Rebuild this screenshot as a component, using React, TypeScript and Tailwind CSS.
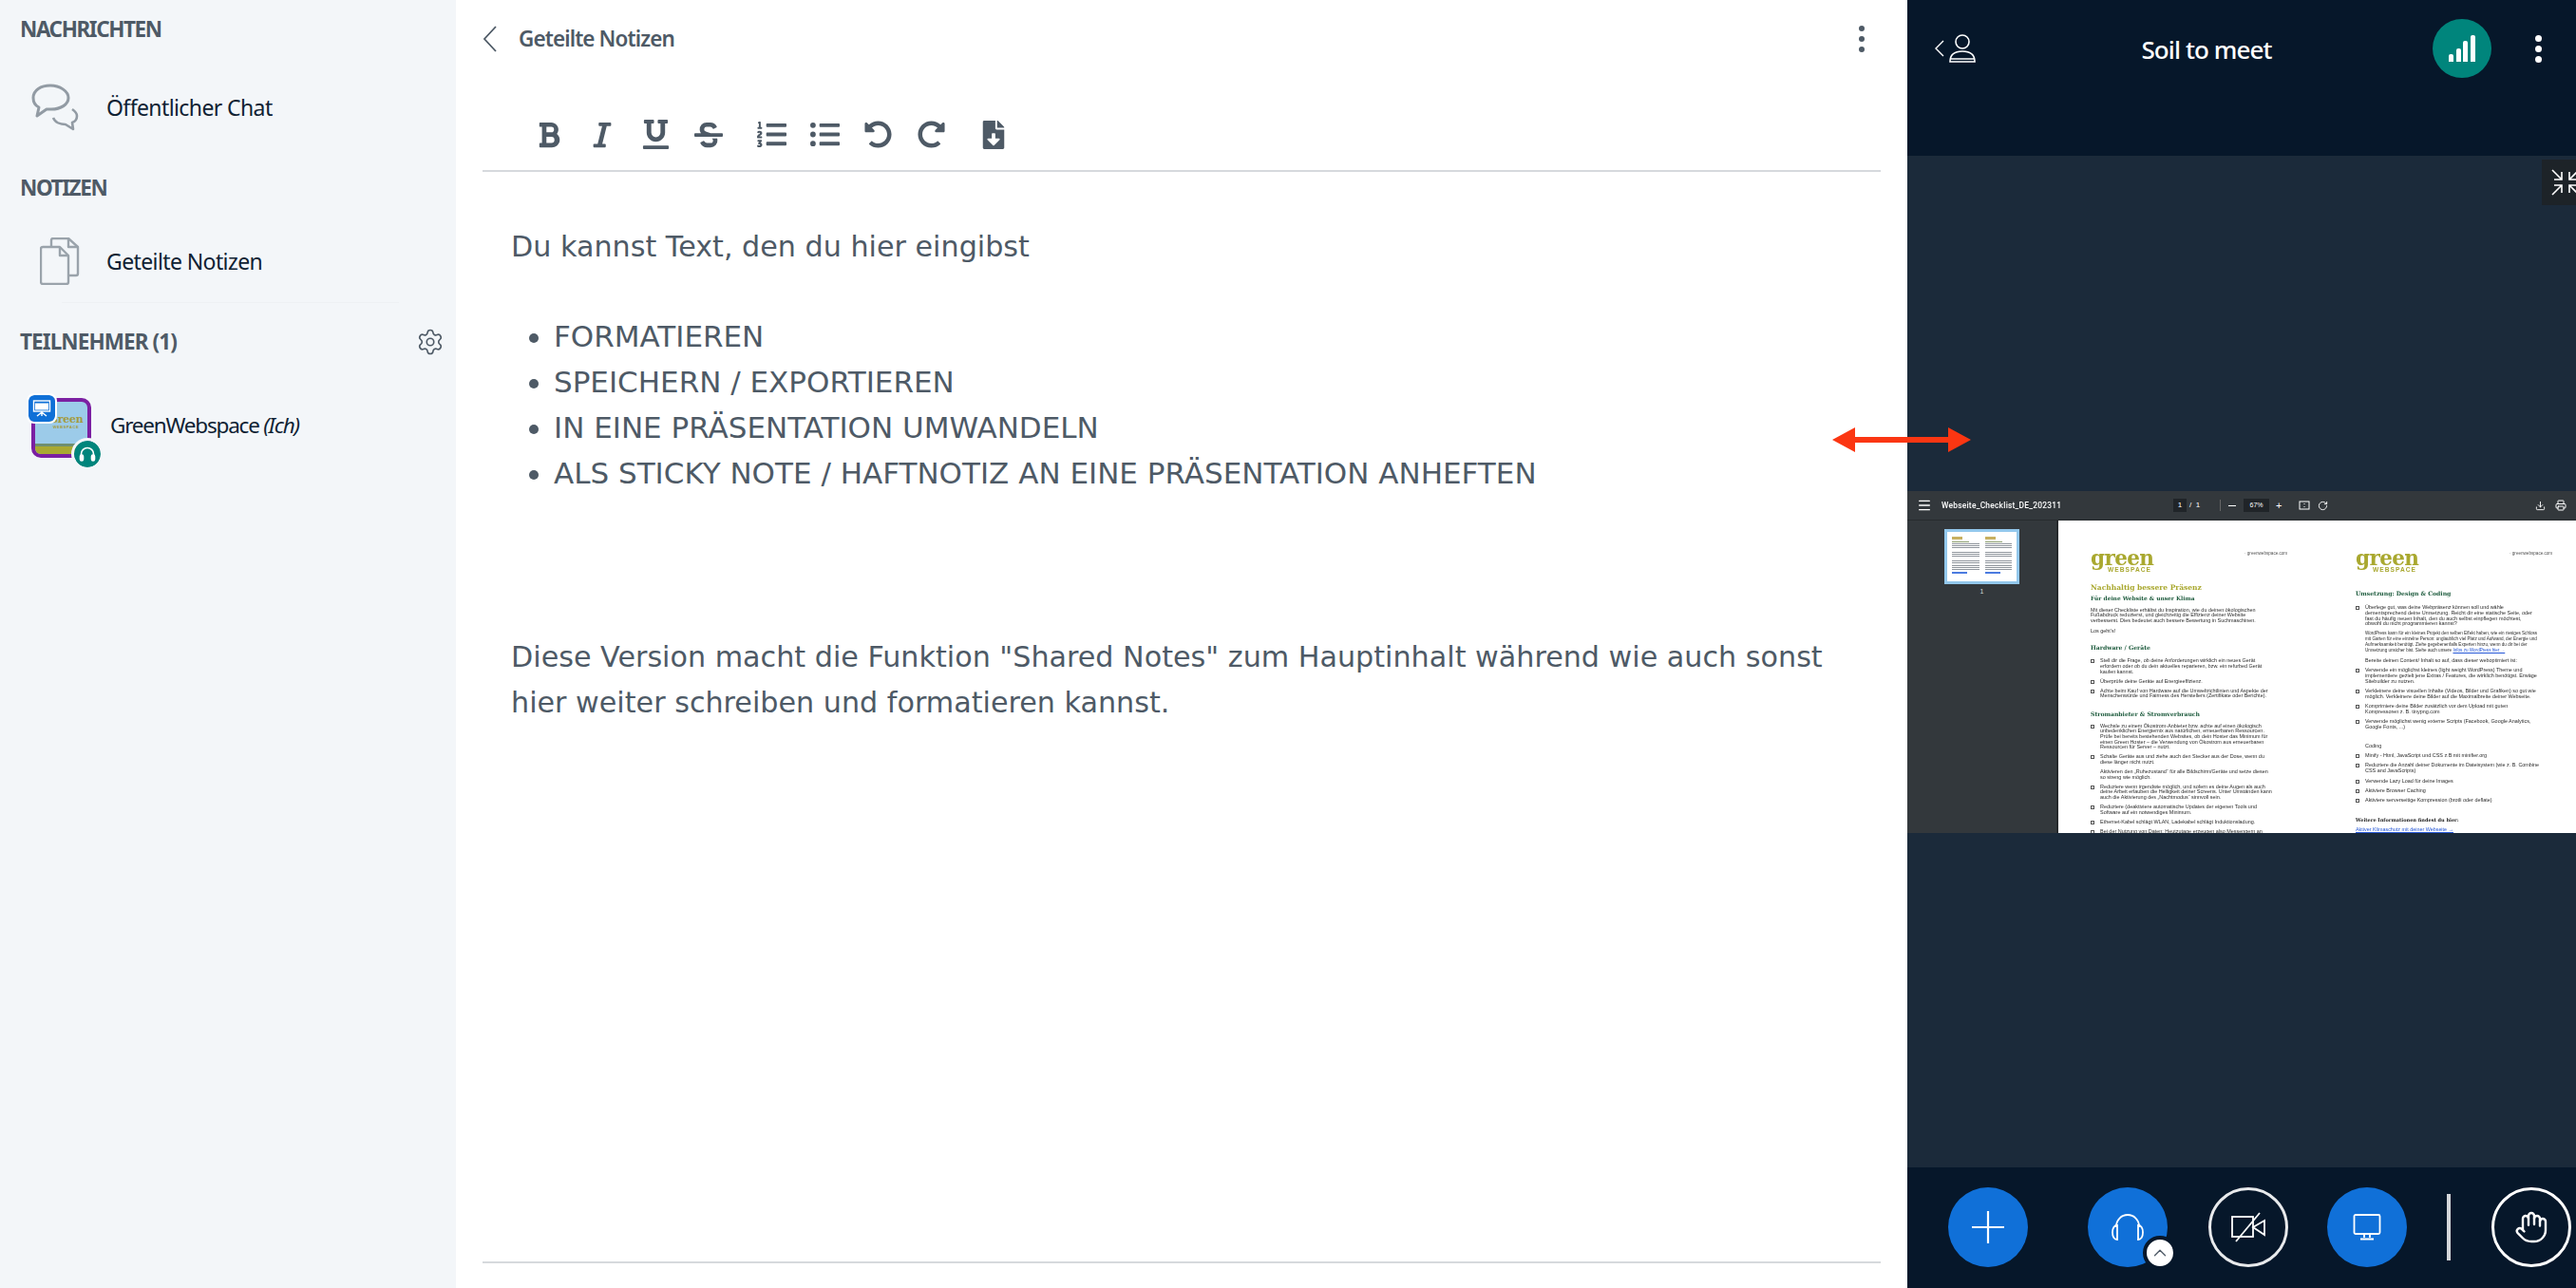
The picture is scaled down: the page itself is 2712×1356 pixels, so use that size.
import React from "react";
import { FaBold, FaItalic, FaUnderline, FaStrikethrough, FaListOl, FaListUl, FaUndoAlt, FaRedoAlt, FaFileDownload } from "react-icons/fa";
import { Settings, Hand, ChevronUp, Download, Printer, RotateCw, Menu } from "lucide-react";

const ui = "font-['Noto_Sans',sans-serif]";

function ChatIcon() {
  return (
    <svg width="50" height="50" viewBox="0 0 50 50" fill="none" stroke="#929ba4" strokeWidth="3" strokeLinejoin="round" className="shrink-0">
      <path d="M20 2C10 2 2 7 2 15c0 5 2 8 6 10l-2 9 10-7c2 0 3 0 5 0 10 0 18-5 18-12S30 2 20 2z" />
      <path d="M43 27c3 2 5 4 5 7 0 3-2 6-5 7l1 7-8-5c-5 0-11-2-13-7" strokeWidth="2.6" />
    </svg>
  );
}

function NotesIcon() {
  return (
    <svg width="42" height="50" viewBox="0 0 42 50" fill="none" stroke="#9aa3ab" strokeWidth="2.4" strokeLinejoin="round" className="shrink-0">
      <path d="M12 9V3c0-1 .6-2 2-2h16l10 9v28c0 1-1 2-2 2h-7" />
      <path d="M30 1v9h10" />
      <path d="M3 10h18l9 9v28c0 1-1 2-2 2H3c-1 0-2-1-2-2V12c0-1 1-2 2-2z" />
      <path d="M21 10v9h9" />
    </svg>
  );
}

function Avatar() {
  return (
    <div className="relative w-[63px] h-[63px] shrink-0">
      <div className="w-full h-full rounded-[10px] border-[4px] border-[#7b1fa2] bg-[#9ccbe9] overflow-hidden flex flex-col items-center">
        <div className="mt-[14px] ml-[10px] font-['DejaVu_Serif',serif] font-bold text-[11px] leading-[10px] text-[#a49b3c] tracking-[-0.3px]">Green</div>
        <div className="ml-[10px] font-['Liberation_Sans',sans-serif] font-bold text-[4px] leading-[5px] tracking-[0.6px] text-[#a49b3c]">WEBSPACE</div>
        <div className="mt-auto w-full h-[3px] bg-[#6f8f70]" />
        <div className="w-full h-[8px] bg-[#a9a932]" />
      </div>
      <div className="absolute left-[-3px] top-[-3px] w-[28px] h-[28px] rounded-[6px] bg-[#0f70d7] outline-[2px] outline-white flex items-center justify-center">
        <svg width="20" height="20" viewBox="0 0 20 20" fill="none" stroke="white" strokeWidth="1.4">
          <rect x="1.500" y="2" width="17" height="11" fill="none" />
          <rect x="3" y="4.500" width="14" height="7" fill="white" stroke="none" />
          <path d="M10 13v5M10 14l-5 4M10 14l5 4" />
        </svg>
      </div>
      <div className="absolute left-[45px] top-[45px] w-[28px] h-[28px] rounded-full bg-[#00857c] outline-[3px] outline-[#f3f6f9] flex items-center justify-center">
        <svg width="18" height="18" viewBox="0 0 18 18" fill="none" stroke="white" strokeWidth="1.6">
          <path d="M2.500 11V9a6.500 6.500 0 0 1 13 0v2" />
          <rect x="1.500" y="10" width="3" height="6" rx="1.400" fill="white" />
          <rect x="13.500" y="10" width="3" height="6" rx="1.400" fill="white" />
        </svg>
      </div>
    </div>
  );
}

function Sidebar() {
  const head = "text-[22.5px] leading-[30px] font-bold text-[#4e5a66]";
  const item = "text-[23px] leading-[30px] text-[#0f2233] tracking-[-0.6px]";
  return (
    <aside className={`w-[480px] shrink-0 h-full bg-[#f3f6f9] flex flex-col ${ui}`}>
      <div className={`${head} ml-[21px] mt-[16px] tracking-[-1.4px]`}>NACHRICHTEN</div>
      <div className="flex items-center ml-[33px] mt-[42px] h-[50px]">
        <ChatIcon />
        <div className={`${item} ml-[29px]`}>Öffentlicher Chat</div>
      </div>
      <div className={`${head} ml-[21px] mt-[45px] tracking-[-1.4px]`}>NOTIZEN</div>
      <div className="flex items-center ml-[42px] mt-[37px] h-[50px]">
        <NotesIcon />
        <div className={`${item} ml-[28px]`}>Geteilte Notizen</div>
      </div>
      <div className="h-px bg-[#eef1f4] ml-[65px] mr-[60px] mt-[18px]" />
      <div className="flex items-center justify-between ml-[21px] mr-[12px] mt-[26px] h-[30px]">
        <div className={`${head} tracking-[-0.9px]`}>TEILNEHMER (1)</div>
        <Settings size={30} strokeWidth={1.3} color="#4e5a66" />
      </div>
      <div className="flex items-center ml-[33px] mt-[44px]">
        <Avatar />
        <div className="ml-[20px] text-[22.5px] leading-[30px] text-[#0f2233] tracking-[-1.2px] relative top-[-3px]">
          GreenWebspace <span className="italic">(Ich)</span>
        </div>
      </div>
    </aside>
  );
}

function Tool({ children, className = "" }: { children: React.ReactNode; className?: string }) {
  return <div className={`w-[56px] shrink-0 flex justify-center text-[#4e5a66] ${className}`}>{children}</div>;
}

function Notes() {
  return (
    <main className="flex-1 h-full bg-white flex flex-col">
      <div className="flex items-center h-[82px] pl-[28px] pr-[45px]">
        <svg width="16" height="28" viewBox="0 0 16 28" fill="none" stroke="#4e5a66" strokeWidth="1.8"><path d="M14 1L2 14l12 13" /></svg>
        <div className={`ml-[22px] text-[22.5px] font-semibold text-[#4e5a66] tracking-[-0.9px] ${ui}`}>Geteilte Notizen</div>
        <div className="ml-auto flex flex-col gap-[5px]">
          <div className="w-[6px] h-[6px] rounded-full bg-[#4e5a66]" />
          <div className="w-[6px] h-[6px] rounded-full bg-[#4e5a66]" />
          <div className="w-[6px] h-[6px] rounded-full bg-[#4e5a66]" />
        </div>
      </div>
      <div className="mx-[28px] h-[99px] border-b-2 border-[#d6d9dd] flex items-center pl-[42px] pt-[22px]">
        <Tool><FaBold size={30} /></Tool>
        <Tool><FaItalic size={30} /></Tool>
        <Tool><FaUnderline size={31} /></Tool>
        <Tool><FaStrikethrough size={30} /></Tool>
        <Tool className="ml-[10px]"><FaListOl size={31} /></Tool>
        <Tool><FaListUl size={31} /></Tool>
        <Tool><FaUndoAlt size={29} /></Tool>
        <Tool><FaRedoAlt size={29} /></Tool>
        <Tool className="ml-[10px]"><FaFileDownload size={30} /></Tool>
      </div>
      <div className="flex-1 pl-[58px] pt-[55px] font-['DejaVu_Sans',sans-serif] text-[30.2px] leading-[48px] text-[#4e5a66]">
        <div>Du kannst Text, den du hier eingibst</div>
        <ul className="list-disc mt-[46px] pl-[45px] text-[31px]">
          <li>FORMATIEREN</li>
          <li>SPEICHERN / EXPORTIEREN</li>
          <li>IN EINE PRÄSENTATION UMWANDELN</li>
          <li>ALS STICKY NOTE / HAFTNOTIZ AN EINE PRÄSENTATION ANHEFTEN</li>
        </ul>
        <div className="mt-[146px] whitespace-nowrap">Diese Version macht die Funktion "Shared Notes" zum Hauptinhalt während wie auch sonst</div>
        <div className="whitespace-nowrap">hier weiter schreiben und formatieren kannst.</div>
      </div>
      <div className="mx-[28px] h-[28px] border-t-2 border-[#d6d9dd]" />
    </main>
  );
}

function Lines({ lines, className = "" }: { lines: string[]; className?: string }) {
  return (
    <div className={className}>
      {lines.map((l) => (
        <div key={l} className="h-[5.7px] leading-[5.7px] whitespace-nowrap">{l}</div>
      ))}
    </div>
  );
}

function Item({ lines, className = "" }: { lines: string[]; className?: string }) {
  return (
    <div className={`flex ${className}`}>
      <div className="w-[4px] h-[4px] mt-[1px] border-[0.6px] border-[#555] shrink-0" />
      <Lines lines={lines} className="ml-[6px]" />
    </div>
  );
}

function Logo() {
  return (
    <div className="h-[24px] flex flex-col font-bold text-[#a9a82f]">
      <div className="font-['DejaVu_Serif',serif] text-[21.5px] leading-[17px] tracking-[-0.6px]">green</div>
      <div className="font-['Liberation_Sans',sans-serif] text-[6.6px] leading-[7px] tracking-[1.05px] ml-[18px]">WEBSPACE</div>
    </div>
  );
}

const serifH = "font-['DejaVu_Serif',serif] font-bold text-[#1c5a3c] whitespace-nowrap";

function DocPage() {
  return (
    <div className="flex-1 h-full bg-white overflow-hidden flex pl-[34px] pt-[31px] blur-[0.25px] font-['Liberation_Sans',sans-serif] text-[5.45px] text-[#2c2c2c]">
      <div className="w-[279px] shrink-0">
        <div className="relative">
          <Logo />
          <div className="absolute left-[162px] top-[1px] text-[4.6px] leading-[5px] text-[#555]">· greenwebspace.com</div>
        </div>
        <div className="font-['DejaVu_Serif',serif] font-bold text-[#a9a82f] text-[7.5px] leading-[9px] mt-[10.5px] whitespace-nowrap">Nachhaltig bessere Präsenz</div>
        <div className={`${serifH} text-[5.9px] leading-[7px] mt-[3px]`}>Für deine Website &amp; unser Klima</div>
        <Lines className="mt-[7px]" lines={["Mit dieser Checkliste erhältst du Inspiration, wie du deinen ökologischen", "Fußabdruck reduzierst, und gleichzeitig die Effizienz deiner Website", "verbesserst. Dies bedeutet auch bessere Bewertung in Suchmaschinen."]} />
        <Lines className="mt-[5px]" lines={["Los geht's!"]} />
        <div className={`${serifH} text-[6.1px] leading-[7px] mt-[11px]`}>Hardware / Geräte</div>
        <Item className="mt-[8px]" lines={["Stell dir die Frage, ob deine Anforderungen wirklich ein neues Gerät", "erfordern oder ob du dein aktuelles reparieren, bzw. ein refurbed Gerät", "kaufen kannst."]} />
        <Item className="mt-[4.3px]" lines={["Überprüfe deine Geräte auf Energieeffizienz."]} />
        <Item className="mt-[4.3px]" lines={["Achte beim Kauf von Hardware auf die Umweltrichtlinien und Aspekte der", "Menschenwürde und Fairness des Herstellers (Zertifikate oder Berichte)."]} />
        <div className={`${serifH} text-[6.1px] leading-[7px] mt-[12px]`}>Stromanbieter &amp; Stromverbrauch</div>
        <Item className="mt-[6.6px]" lines={["Wechsle zu einem Ökostrom-Anbieter bzw. achte auf einen ökologisch", "unbedenklichen Energiemix aus natürlichen, erneuerbaren Ressourcen.", "Prüfe bei bereits bestehenden Websites, ob dein Hoster das Minimum für", "einen Green Hoster – die Verwendung von Ökostrom aus erneuerbaren", "Ressourcen für Server – nutzt."]} />
        <Item className="mt-[4.3px]" lines={["Schalte Geräte aus und ziehe auch den Stecker aus der Dose, wenn du", "diese länger nicht nutzt."]} />
        <Lines className="mt-[4.3px] ml-[10px]" lines={["Aktivieren den „Ruhezustand“ für alle Bildschirm/Geräte und setze diesen", "so streng wie möglich."]} />
        <Item className="mt-[4.3px]" lines={["Reduziere wenn irgendwie möglich, und sofern es deine Augen als auch", "deine Arbeit erlauben die Helligkeit deiner Screens. Unter Umständen kann", "auch die Aktivierung des „Nachtmodus“ sinnvoll sein."]} />
        <Item className="mt-[4.3px]" lines={["Reduziere (deaktiviere automatische Updates der eigenen Tools und", "Software auf ein notwendiges Minimum."]} />
        <Item className="mt-[4.3px]" lines={["Ethernet-Kabel schlägt WLAN, Ladekabel schlägt Induktionsladung."]} />
        <Item className="mt-[4.3px]" lines={["Bei der Nutzung von Daten: Heutzutage erzeugen also Messengern an"]} />
      </div>
      <div className="w-[212px] shrink-0 relative">
        <div className="relative">
          <Logo />
          <div className="absolute left-[162px] top-[1px] text-[4.6px] leading-[5px] text-[#555] whitespace-nowrap">· greenwebspace.com</div>
        </div>
        <div className={`${serifH} text-[6.1px] leading-[7px] mt-[17.5px]`}>Umsetzung: Design &amp; Coding</div>
        <Item className="mt-[9.7px]" lines={["Überlege gut, was deine Webpräsenz können soll und wähle", "dementsprechend deine Umsetzung. Reicht dir eine statische Seite, oder", "fast du häufig neuen Inhalt, den du auch selbst einpflegen möchtest,", "obwohl du nicht programmieren kannst?"]} />
        <div className="mt-[4.5px] ml-[10px] text-[4.6px]">
          <Lines lines={["WordPress kann für ein kleines Projekt den selben Effekt haben, wie ein riesiges Schloss", "mit Garten für eine einzelne Person: unglaublich viel Platz und Aufwand, der Energie und", "Aufmerksamkeit benötigt. Ziehe gegebenenfalls Experten hinzu, wenn du dir bei der"]} />
          <div className="h-[5.7px] leading-[5.7px] whitespace-nowrap">Umsetzung unsicher bist. Siehe auch unsere <span className="text-[#2456d6] underline">Infos zu WordPress hier →</span></div>
        </div>
        <Lines className="mt-[6px] ml-[10px]" lines={["Bereite deinen Content/ Inhalt so auf, dass dieser weboptimiert ist:"]} />
        <Item className="mt-[4.3px]" lines={["Verwende ein möglichst kleines (light weight WordPress) Theme und", "implementiere gezielt jene Extras / Features, die wirklich benötigst. Erwäge", "Sitebuilder zu nutzen."]} />
        <Item className="mt-[5px]" lines={["Verkleinere deine visuellen Inhalte (Videos, Bilder und Grafiken) so gut wie", "möglich. Verkleinere deine Bilder auf die Maximalbreite deiner Webseite."]} />
        <Item className="mt-[4.7px]" lines={["Komprimiere deine Bilder zusätzlich vor dem Upload mit guten", "Kompressoren z. B. tinypng.com"]} />
        <Item className="mt-[4.7px]" lines={["Verwende möglichst wenig externe Scripts (Facebook, Google Analytics,", "Google Fonts, ...)"]} />
        <Lines className="mt-[14.5px] ml-[10px]" lines={["Coding"]} />
        <Item className="mt-[4.3px]" lines={["Minify - Html, JavaScript und CSS z.B mit minifier.org"]} />
        <Item className="mt-[4.3px]" lines={["Reduziere die Anzahl deiner Dokumente im Dateisystem (wie z. B. Combine", "CSS and JavaScripts)"]} />
        <Item className="mt-[5px]" lines={["Verwende Lazy Load für deine Images"]} />
        <Item className="mt-[5px]" lines={["Aktiviere Browser Caching"]} />
        <Item className="mt-[4.5px]" lines={["Aktiviere serverseitige Kompression (brotli oder deflate)"]} />
        <div className="font-['DejaVu_Serif',serif] font-bold text-[5px] leading-[6px] text-[#222] mt-[14px] whitespace-nowrap">Weitere Informationen findest du hier:</div>
        <div className="mt-[4px] text-[5.4px] leading-[6px] text-[#2456d6] underline whitespace-nowrap">Aktiver Klimaschutz mit deiner Webseite →</div>
      </div>
    </div>
  );
}

function Thumb() {
  const line = "h-[0.8px] bg-[#8f959c] mt-[1.3px]";
  return (
    <div className="w-[79px] h-[58px] border-[3px] border-[#93c8ec] bg-white flex gap-[6px] px-[5px] pt-[5px] overflow-hidden">
      {[0, 1].map((c) => (
        <div key={c} className="flex-1">
          <div className="w-[11px] h-[2.5px] bg-[#c8b060]" />
          <div className="w-[18px] h-[1px] bg-[#8c9f70] mt-[2px]" />
          <div className={line} /><div className={line} /><div className={line} />
          <div className="h-[3px]" />
          <div className={line} /><div className={line} />
          <div className={line} /><div className="h-[3px]" />
          <div className={line} /><div className={line} /><div className={line} />
          <div className={line} /><div className={line} />
          <div className="h-[2px] w-[16px] bg-[#4b7be0] mt-[2px]" />
        </div>
      ))}
    </div>
  );
}

function DocViewer() {
  return (
    <div className="mt-[353px] h-[360px] flex flex-col overflow-hidden">
      <div className="h-[31px] shrink-0 bg-[#33383c] flex items-center text-white font-['Liberation_Sans',sans-serif] border-b border-[#272b2e]">
        <Menu size={16} className="ml-[10px] shrink-0" />
        <div className="ml-[10px] font-['Roboto',sans-serif] text-[8.4px] font-medium tracking-[0.25px] w-[244px] shrink-0 blur-[0.2px]">Webseite_Checklist_DE_202311</div>
        <div className="w-[14px] h-[14px] bg-[#202428] text-[8px] leading-[14px] text-center shrink-0">1</div>
        <div className="ml-[3px] text-[8px] shrink-0 w-[24px]">/ &nbsp;1</div>
        <div className="w-px h-[12px] bg-[#666] ml-[8px] shrink-0" />
        <div className="w-[8px] h-[1px] bg-white ml-[8px] shrink-0" />
        <div className="ml-[8px] w-[27px] h-[14px] bg-[#202428] text-[7px] leading-[14px] text-center shrink-0">67%</div>
        <div className="ml-[7px] text-[11px] leading-[11px] shrink-0">+</div>
        <svg width="12" height="12" viewBox="0 0 12 12" fill="none" stroke="white" strokeWidth="1" className="ml-[18px] shrink-0"><rect x="1" y="2" width="10" height="8" /><path d="M6 4v1M6 7v1" /></svg>
        <RotateCw size={11} className="ml-[8px] shrink-0" />
        <Download size={11} className="ml-[218px] shrink-0" />
        <Printer size={12} className="ml-[10px] shrink-0" />
        <div className="ml-[14px] flex flex-col gap-[1.5px] shrink-0">
          <div className="w-[2px] h-[2px] bg-white rounded-full" />
          <div className="w-[2px] h-[2px] bg-white rounded-full" />
          <div className="w-[2px] h-[2px] bg-white rounded-full" />
        </div>
      </div>
      <div className="flex-1 flex min-h-0">
        <div className="w-[159px] shrink-0 bg-[#33383c] border-r-2 border-[#26292c] pt-[9px] flex flex-col items-center text-[#d8dadc] font-['Liberation_Sans',sans-serif] text-[7px] leading-[7px]">
          <Thumb />
          <div className="mt-[4px]">1</div>
        </div>
        <DocPage />
      </div>
    </div>
  );
}

function Round({ className = "", children }: { className?: string; children: React.ReactNode }) {
  return <div className={`w-[84px] h-[84px] rounded-full flex items-center justify-center shrink-0 ${className}`}>{children}</div>;
}

function RightPanel() {
  return (
    <section className={`w-[704px] shrink-0 h-full bg-[#1b2a3a] flex flex-col ${ui}`}>
      <header className="h-[164px] shrink-0 bg-[#06172a] flex items-start text-white">
        <div className="mt-[36px] ml-[29px] flex items-center">
          <svg width="10" height="18" viewBox="0 0 10 18" fill="none" stroke="white" strokeWidth="1.4"><path d="M9 1L1 9l8 8" /></svg>
          <svg width="28" height="30" viewBox="0 0 28 30" fill="none" stroke="white" strokeWidth="1.6" className="ml-[5px]">
            <ellipse cx="14" cy="8" rx="7" ry="7" />
            <path d="M1 29c0-8 5-11 13-11s13 3 13 11zM1 26h26" />
          </svg>
        </div>
        <div className="mt-[34px] ml-[172px] w-[142px] text-center text-[26px] leading-[36px] font-medium tracking-[-0.9px] whitespace-nowrap">Soil to meet</div>
        <div className="mt-[20px] ml-[167px] w-[62px] h-[62px] rounded-full bg-[#00857c] flex items-end justify-center gap-[2.5px] pb-[17px] shrink-0">
          <div className="w-[5px] h-[8px] bg-white rounded-t-[2px]" />
          <div className="w-[5px] h-[14px] bg-white rounded-t-[2px]" />
          <div className="w-[5px] h-[22px] bg-white rounded-t-[2px]" />
          <div className="w-[5px] h-[28px] bg-white rounded-t-[2px]" />
        </div>
        <div className="mt-[37px] ml-[46px] flex flex-col gap-[4px]">
          <div className="w-[7px] h-[7px] rounded-full bg-white" />
          <div className="w-[7px] h-[7px] rounded-full bg-white" />
          <div className="w-[7px] h-[7px] rounded-full bg-white" />
        </div>
      </header>
      <div className="flex-1 min-h-0 relative">
        <DocViewer />
        <div className="absolute right-0 top-[4px] w-[36px] h-[48px] bg-[#1d2328] overflow-hidden">
          <svg width="36" height="48" viewBox="0 0 36 48" fill="none" stroke="white" strokeWidth="1.6">
            <path d="M11 11l10 10M21 13v8h-8M39 11l-10 10M29 13v8h8M11 37l10-10M21 35v-8h-8M39 37l-10-10M29 35v-8h8" />
          </svg>
        </div>
      </div>
      <footer className="h-[127px] shrink-0 bg-[#06172a] flex items-center pl-[43px] pb-[2px]">
        <Round className="bg-[#1070d8]">
          <svg width="36" height="36" viewBox="0 0 36 36" stroke="white" strokeWidth="2.2"><path d="M18 1v34M1 18h34" /></svg>
        </Round>
        <div className="relative ml-[63px] shrink-0">
          <Round className="bg-[#1070d8]">
            <svg width="36" height="30" viewBox="0 0 36 30" fill="none" stroke="white" strokeWidth="1.8">
              <path d="M6 15V14a12 12 0 0 1 24 0v1" />
              <path d="M7 13v15c-3 0-5-3-5-7.500S4 13 7 13zM29 13v15c3 0 5-3 5-7.500S32 13 29 13z" />
            </svg>
          </Round>
          <div className="absolute left-[58px] top-[51px] w-[36px] h-[36px] rounded-full bg-white border-[4px] border-[#06172a] flex items-center justify-center">
            <ChevronUp size={22} strokeWidth={1.4} color="#4e5a66" />
          </div>
        </div>
        <Round className="ml-[43px] border-[3px] border-[#e8eaec]">
          <svg width="36" height="32" viewBox="0 0 36 32" fill="none" stroke="white" strokeWidth="1.8">
            <rect x="1" y="5" width="22" height="21" />
            <path d="M23 16l12-7v15zM30 1L5 31" />
          </svg>
        </Round>
        <Round className="ml-[41px] bg-[#1070d8]">
          <svg width="30" height="28" viewBox="0 0 30 28" fill="none" stroke="white" strokeWidth="1.8">
            <rect x="1.500" y="1" width="27" height="20" rx="1.500" />
            <path d="M12 21v4M18 21v4M8 26.500h14" />
          </svg>
        </Round>
        <div className="ml-[42px] w-[4px] h-[70px] bg-[#d3d6d9] shrink-0" />
        <Round className="ml-[43px] border-[3px] border-white">
          <Hand size={36} strokeWidth={1.6} color="white" />
        </Round>
      </footer>
    </section>
  );
}

export default function App() {
  return (
    <div className="relative w-[2712px] h-[1356px] flex overflow-hidden bg-white">
      <Sidebar />
      <Notes />
      <RightPanel />
      <svg width="146" height="28" viewBox="0 0 146 28" className="absolute left-[1929px] top-[449px]">
        <path d="M0 14L24 1v10h98V1l24 13-24 13V17H24v10z" fill="#fb3612" />
      </svg>
    </div>
  );
}
